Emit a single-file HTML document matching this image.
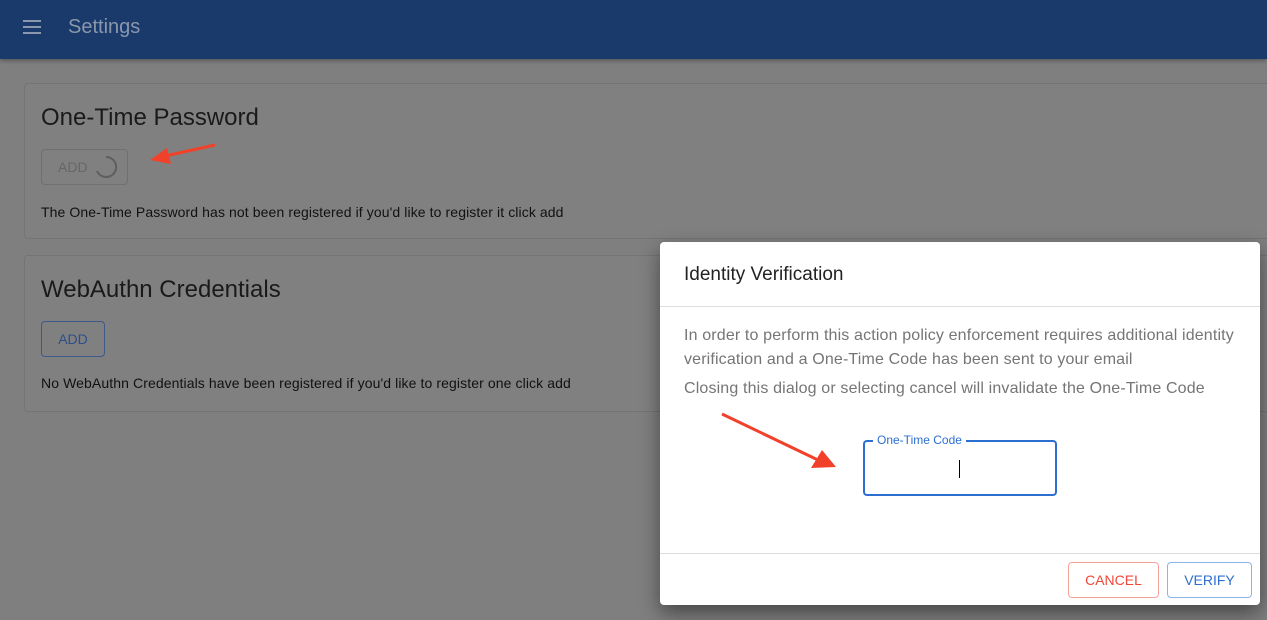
<!DOCTYPE html>
<html><head><meta charset="utf-8"><style>
*{box-sizing:border-box;margin:0;padding:0}
body{width:1267px;height:620px;overflow:hidden;background:#7f7f7f;font-family:"Liberation Sans",sans-serif;position:relative}
.hdr{position:absolute;left:0;top:0;width:1267px;height:59px;background:#193a6b;box-shadow:0 2px 4px rgba(0,0,0,.3)}
.hdr .t{position:absolute;left:68px;top:16px;font-size:20px;color:#8a97ac}
.bar{position:absolute;left:23px;width:18px;height:2px;background:#8a97ac}
.card{position:absolute;left:24px;width:1260px;border:1px solid #747474;border-radius:4px;background:#808080}
.card h2{position:absolute;left:16px;font-weight:normal;font-size:24px;color:#1a1a1a}
.btn{position:absolute;border:1px solid;border-radius:4px;font-size:14px;text-align:center}
.card p{position:absolute;left:16px;font-size:14px;color:#111;letter-spacing:.1px}
.dlg{position:absolute;left:660px;top:242px;width:600px;height:363px;background:#fff;border-radius:4px;box-shadow:0 8px 20px rgba(0,0,0,.45)}
</style></head><body>
<div class="hdr"><div class="bar" style="top:20px"></div><div class="bar" style="top:26px"></div><div class="bar" style="top:32px"></div><div class="t">Settings</div></div>
<div class="card" style="top:83px;height:156px">
<h2 style="top:20px">One-Time Password</h2>
<div class="btn" style="left:16px;top:65px;width:87px;height:36px;border-color:#707070;color:#666;line-height:34px;text-align:left;padding-left:16px">ADD
<svg style="position:absolute;left:52px;top:5px" width="24" height="24" viewBox="0 0 24 24"><path d="M12 2 A10 10 0 1 1 3 16" fill="none" stroke="#5e5e5e" stroke-width="2"/></svg></div>
<p style="top:120px">The One-Time Password has not been registered if you'd like to register it click add</p>
</div>
<svg style="position:absolute;left:145px;top:140px" width="75" height="30"><line x1="70" y1="5" x2="20" y2="16" stroke="#f2412a" stroke-width="3"/><polygon points="5,20 22,8 26,24" fill="#f2412a"/></svg>
<div class="card" style="top:255px;height:157px">
<h2 style="top:20px">WebAuthn Credentials</h2>
<div class="btn" style="left:16px;top:65px;width:64px;height:36px;border-color:#3d5a8a;color:#2c4f8a;line-height:34px">ADD</div>
<p style="top:119px">No WebAuthn Credentials have been registered if you'd like to register one click add</p>
</div>
<div class="dlg">
<div style="position:absolute;left:24px;top:22px;font-size:19px;color:#222">Identity Verification</div>
<div style="position:absolute;left:0;top:64px;width:600px;height:1px;background:#ddd"></div>
<div style="position:absolute;left:24px;top:82px;width:570px;font-size:16px;line-height:24px;color:#757575;letter-spacing:.15px">In order to perform this action policy enforcement requires additional identity verification and a One-Time Code has been sent to your email</div>
<div style="position:absolute;left:24px;top:138px;font-size:16px;color:#757575;letter-spacing:.15px">Closing this dialog or selecting cancel will invalidate the One-Time Code</div>
<div style="position:absolute;left:203px;top:198px;width:194px;height:56px;border:2px solid #2d6fd0;border-radius:4px"></div>
<div style="position:absolute;left:213px;top:191px;padding:0 4px;background:#fff;font-size:12px;color:#2d6fd0">One-Time Code</div>
<div style="position:absolute;left:299px;top:218px;width:1px;height:18px;background:#000"></div>
<div style="position:absolute;left:0;top:311px;width:600px;height:1px;background:#ddd"></div>
<div class="btn" style="left:408px;top:320px;width:91px;height:36px;border-color:#f5a39a;color:#f0483a;line-height:34px">CANCEL</div>
<div class="btn" style="left:507px;top:320px;width:85px;height:36px;border-color:#8db3ea;color:#2d6fd0;line-height:34px">VERIFY</div>
</div>
<svg style="position:absolute;left:718px;top:410px" width="125" height="65"><line x1="4" y1="4" x2="100" y2="50" stroke="#f2412a" stroke-width="3"/><polygon points="118,57 93,58 104,40" fill="#f2412a"/></svg>
</body></html>
